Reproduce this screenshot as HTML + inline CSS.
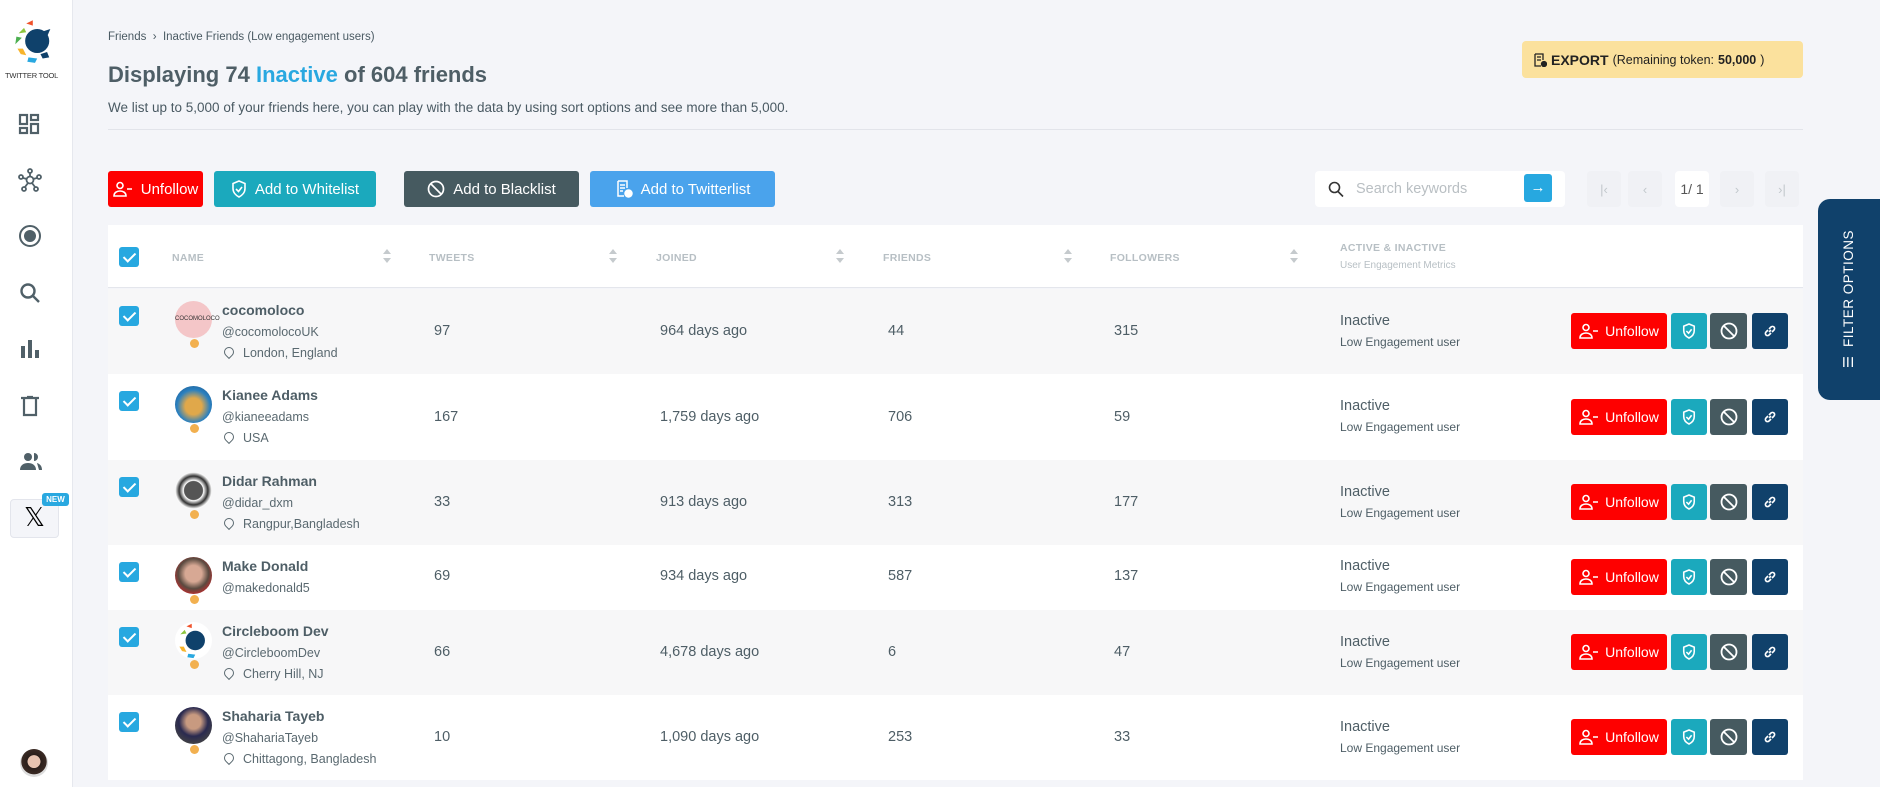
<!DOCTYPE html>
<html><head><meta charset="utf-8">
<style>
*{box-sizing:border-box;margin:0;padding:0}
body{width:1880px;height:787px;overflow:hidden;background:#f4f5f9;font-family:"Liberation Sans",sans-serif;color:#4a5a63;position:relative}
.a{position:absolute}
.side{left:0;top:0;width:73px;height:787px;background:#fff;border-right:1px solid #e6e8ee}
.btn{position:absolute;height:36px;border-radius:3px;color:#fff;font-size:15px;display:flex;align-items:center;justify-content:center;gap:8px}
.row{position:absolute;left:108px;width:1695px}
.row.g{background:#f7f7f8}.row.w{background:#fff}
.cb{position:absolute;left:11px;width:20px;height:20px;background:#27a8e0;border-radius:3px}
.cb:after{content:"";position:absolute;left:7px;top:3px;width:5px;height:10px;border:solid #fff;border-width:0 2px 2px 0;transform:rotate(45deg)}
.av{position:absolute;left:67px;width:37px;height:37px;border-radius:50%}
.dot{position:absolute;left:82px;width:9px;height:9px;border-radius:50%;background:#f2b04f}
.nm{position:absolute;left:114px;font-weight:bold;font-size:14px;color:#4e5e66}
.hd{position:absolute;left:114px;font-size:12.5px;color:#5a6970}
.lc{position:absolute;left:114px;font-size:12.5px;color:#5a6970}
.lc:before{content:"";display:inline-block;width:8px;height:8px;border:1.5px solid #5a6970;border-radius:50% 50% 50% 0;transform:rotate(-45deg);margin:0 9px 0 2px;vertical-align:0}
.n{position:absolute;font-size:14.5px;color:#4e5e66}
.st{position:absolute;left:1232px;font-size:14.5px;color:#4e5e66}
.st2{position:absolute;left:1232px;font-size:12px;color:#4e5e66}
.ab{position:absolute;height:36px;border-radius:3px;display:flex;align-items:center;justify-content:center;color:#fff;font-size:14px;gap:6px}
.th{position:absolute;top:27px;font-size:10.5px;color:#b7bfc4;font-weight:bold;letter-spacing:.3px}
.sort{position:absolute;top:22px;width:10px;height:18px}
.pg{position:absolute;top:171px;width:34px;height:36px;background:#f0f1f5;border-radius:4px;color:#c2c8cc;font-size:13px;display:flex;align-items:center;justify-content:center}
.si{position:absolute;left:18px}
</style></head><body>
<div class="a side">
 <svg class="a" style="left:12px;top:18px" width="46" height="46" viewBox="0 0 40 42">
  <path d="M12 5 L18 2 L18 7 Z" fill="#f0522b"/><path d="M5 14 L10 9 L12 13 Z" fill="#8dc63f"/><path d="M2 24 L3 17 L8 18 Z" fill="#4caf50"/><path d="M4 28 L9 28 L12 34 L7 33Z" fill="#f7b42c"/><path d="M14 36 L22 37 L20 41 L13 40Z" fill="#29a8e0"/>
  <circle cx="22" cy="21" r="11" fill="#0f416b"/><path d="M28 12 L34 10 L31 17Z" fill="#0f416b"/><path d="M25 33 L31 31 L33 36 L27 37Z" fill="#0f416b"/>
 </svg>
 <div class="a" style="left:5px;top:71px;font-size:7.5px;color:#333;letter-spacing:-.2px">TWITTER TOOL</div>
 <svg class="a si" style="top:113px" width="22" height="22" viewBox="0 0 22 22" fill="none" stroke="#506068" stroke-width="2.2"><rect x="2" y="2" width="7" height="9"/><rect x="13" y="2" width="7" height="5"/><rect x="2" y="15" width="7" height="5"/><rect x="13" y="11" width="7" height="9"/></svg>
 <svg class="a si" style="top:168px" width="24" height="24" viewBox="0 0 24 24" fill="none" stroke="#506068" stroke-width="1.8"><circle cx="12" cy="12" r="3.5"/><circle cx="12" cy="3" r="2"/><circle cx="3" cy="9" r="2"/><circle cx="21" cy="9" r="2"/><circle cx="6" cy="21" r="2"/><circle cx="18" cy="21" r="2"/><path d="M12 5v3.5M5 10l4 1M19 10l-4 1M7 19l3-4M17 19l-3-4"/></svg>
 <svg class="a si" style="top:224px" width="24" height="24" viewBox="0 0 24 24"><circle cx="12" cy="12" r="10" fill="none" stroke="#506068" stroke-width="2"/><circle cx="12" cy="12" r="6" fill="#506068"/></svg>
 <svg class="a si" style="top:281px" width="24" height="24" viewBox="0 0 24 24" fill="none" stroke="#506068" stroke-width="2.4"><circle cx="10" cy="10" r="6.5"/><path d="M15 15l6 6"/></svg>
 <svg class="a si" style="top:337px" width="24" height="24" viewBox="0 0 24 24" fill="#506068"><rect x="3" y="9" width="4" height="12"/><rect x="10" y="3" width="4" height="18"/><rect x="17" y="13" width="4" height="8"/></svg>
 <svg class="a si" style="top:394px" width="24" height="24" viewBox="0 0 24 24" fill="none" stroke="#506068" stroke-width="2.2"><path d="M3 4h18M9 3h6M6 5v16h12V5"/></svg>
 <svg class="a si" style="top:449px" width="26" height="24" viewBox="0 0 26 24" fill="#506068"><circle cx="10" cy="8" r="4"/><path d="M2 21c0-5 4-7 8-7s8 2 8 7z"/><path d="M16 4a4 4 0 010 8zM19 14c3 1 5 3 5 7h-3z"/></svg>
 <div class="a" style="left:10px;top:499px;width:49px;height:39px;background:#f4f5f9;border:1px solid #e3e5ec;border-radius:4px;font-size:26px;color:#000;text-align:center;line-height:37px;font-family:'DejaVu Sans',sans-serif">𝕏</div>
 <div class="a" style="left:42px;top:493px;width:27px;height:13px;background:#29a8e0;border-radius:3px;color:#fff;font-size:8px;font-weight:bold;text-align:center;line-height:13px">NEW</div>
 <div class="a" style="left:20px;top:749px;width:28px;height:28px;border-radius:50%;background:radial-gradient(circle at 50% 45%,#e8c3b0 30%,#2a1e1a 32%,#3a2a24 60%,#ddd 62%)"></div>
</div>

<div class="a" style="left:108px;top:31px;font-size:11.5px;color:#4a5a63">Friends &nbsp;›&nbsp; Inactive Friends (Low engagement users)</div>
<div class="a" style="left:108px;top:62px;font-size:22px;font-weight:bold;color:#4e5e66">Displaying 74 <span style="color:#29a8e0">Inactive</span> of 604 friends</div>
<div class="a" style="left:108px;top:100px;font-size:13.5px;color:#4a5a63">We list up to 5,000 of your friends here, you can play with the data by using sort options and see more than 5,000.</div>
<div class="a" style="left:108px;top:129px;width:1695px;height:1px;background:#e2e4ea"></div>
<div class="a" style="left:1522px;top:41px;width:281px;height:37px;background:#fbe19d;border-radius:4px;font-size:12.5px;color:#222;display:flex;align-items:center;padding-left:11px;gap:4px">
 <svg width="14" height="14" viewBox="0 0 14 14" fill="none" stroke="#222" stroke-width="1.3"><path d="M2 1h8v6M2 1v12h6M4 4h4M4 7h4"/><circle cx="11" cy="11" r="2.5" fill="#222"/></svg>
 <b style="font-size:14px">EXPORT</b> (Remaining token: <b>50,000</b>)</div>

<div class="btn" style="left:108px;top:171px;width:95px;background:#fe0000"><svg width="20" height="16" viewBox="0 0 20 16" fill="none" stroke="#fff" stroke-width="1.6"><circle cx="7" cy="4.5" r="3"/><path d="M1 15c0-3.5 3-5 6-5s6 1.5 6 5zM14 8h5"/></svg>Unfollow</div>
<div class="btn" style="left:214px;top:171px;width:162px;background:#1ba9bd"><svg width="16" height="18" viewBox="0 0 16 18" fill="none" stroke="#fff" stroke-width="1.6"><path d="M8 1l6 2.5v5c0 4-3 7-6 8.5-3-1.5-6-4.5-6-8.5v-5z"/><path d="M5 9l2.5 2.5L11 7"/></svg>Add to Whitelist</div>
<div class="btn" style="left:404px;top:171px;width:175px;background:#465a60"><svg width="18" height="18" viewBox="0 0 18 18" fill="none" stroke="#fff" stroke-width="1.7"><circle cx="9" cy="9" r="7.5"/><path d="M4 4l10 10"/></svg>Add to Blacklist</div>
<div class="btn" style="left:590px;top:171px;width:185px;background:#4aa3ec"><svg width="18" height="18" viewBox="0 0 18 18" fill="none" stroke="#fff" stroke-width="1.5"><path d="M3 1h9v7M3 1v15h6M5 5h5M5 8h5M5 11h3"/><circle cx="13.5" cy="13.5" r="3.5" fill="#fff"/></svg>Add to Twitterlist</div>

<div class="a" style="left:1315px;top:171px;width:250px;height:36px;background:#fff;border-radius:4px">
 <svg class="a" style="left:13px;top:10px" width="16" height="17" viewBox="0 0 16 17" fill="none" stroke="#333" stroke-width="1.6"><circle cx="6.5" cy="6.5" r="5"/><path d="M10 10.5l5 5"/></svg>
 <div class="a" style="left:41px;top:10px;font-size:14.5px;color:#b9bfc3">Search keywords</div>
 <div class="a" style="left:209px;top:3px;width:28px;height:28px;background:#27a8e0;border-radius:3px;color:#fff;font-size:15px;text-align:center;line-height:27px;font-weight:bold">→</div>
</div>
<div class="pg" style="left:1587px">|‹</div><div class="pg" style="left:1628px">‹</div>
<div class="pg" style="left:1675px;background:#fff;color:#555;font-size:14px">1/ 1</div>
<div class="pg" style="left:1720px">›</div><div class="pg" style="left:1765px">›|</div>

<div class="a" style="left:1818px;top:199px;width:62px;height:201px;background:#10416b;border-radius:12px 0 0 12px">
 <div class="a" style="left:31px;top:100px;transform:translate(-50%,-50%) rotate(-90deg);white-space:nowrap;color:#fff;font-size:13.5px;letter-spacing:.5px">☰&nbsp; FILTER OPTIONS</div>
</div>

<div class="a" style="left:108px;top:225px;width:1695px;height:63px;background:#fff;border-bottom:1px solid #e4e6ec">
 <div class="cb" style="top:22px"></div>
 <div class="th" style="left:64px">NAME</div><div class="th" style="left:321px">TWEETS</div><div class="th" style="left:548px">JOINED</div><div class="th" style="left:775px">FRIENDS</div><div class="th" style="left:1002px">FOLLOWERS</div>
 <div class="th" style="left:1232px;top:17px">ACTIVE &amp; INACTIVE</div>
 <div class="a" style="left:1232px;top:35px;font-size:10px;color:#b7bfc4">User Engagement Metrics</div>
 <svg class="sort" style="left:274px" viewBox="0 0 10 18" fill="#c5cacd"><path d="M1 7l4-5 4 5zM1 11l4 5 4-5z"/></svg>
 <svg class="sort" style="left:500px" viewBox="0 0 10 18" fill="#c5cacd"><path d="M1 7l4-5 4 5zM1 11l4 5 4-5z"/></svg>
 <svg class="sort" style="left:727px" viewBox="0 0 10 18" fill="#c5cacd"><path d="M1 7l4-5 4 5zM1 11l4 5 4-5z"/></svg>
 <svg class="sort" style="left:955px" viewBox="0 0 10 18" fill="#c5cacd"><path d="M1 7l4-5 4 5zM1 11l4 5 4-5z"/></svg>
 <svg class="sort" style="left:1181px" viewBox="0 0 10 18" fill="#c5cacd"><path d="M1 7l4-5 4 5zM1 11l4 5 4-5z"/></svg>
</div>

<div class="row g" style="top:289px;height:85px">
 <div class="cb" style="top:17px"></div>
 <div class="av" style="top:12px;background:#f4c6c8;font-size:6px;color:#333;text-align:center;line-height:37px">COCOMOLOCO</div><div class="dot" style="top:50px"></div>
 <div class="nm" style="top:13px">cocomoloco</div><div class="hd" style="top:36px">@cocomolocoUK</div><div class="lc" style="top:57px">London, England</div>
 <div class="n" style="left:326px;top:34px">97</div><div class="n" style="left:552px;top:34px">964 days ago</div><div class="n" style="left:780px;top:34px">44</div><div class="n" style="left:1006px;top:34px">315</div>
 <div class="st" style="top:24px">Inactive</div><div class="st2" style="top:46px">Low Engagement user</div>
 <div class="ab" style="left:1463px;top:24px;width:96px;background:#fe0000"><svg width="20" height="16" viewBox="0 0 20 16" fill="none" stroke="#fff" stroke-width="1.6"><circle cx="7" cy="4.5" r="3"/><path d="M1 15c0-3.5 3-5 6-5s6 1.5 6 5zM14 8h5"/></svg>Unfollow</div>
 <div class="ab" style="left:1563px;top:24px;width:36px;background:#1ba9bd"><svg width="14" height="16" viewBox="0 0 16 18" fill="none" stroke="#fff" stroke-width="1.8"><path d="M8 1l6 2.5v5c0 4-3 7-6 8.5-3-1.5-6-4.5-6-8.5v-5z"/><path d="M5 9l2.5 2.5L11 7"/></svg></div>
 <div class="ab" style="left:1602px;top:24px;width:37px;background:#465a60"><svg width="18" height="18" viewBox="0 0 18 18" fill="none" stroke="#fff" stroke-width="1.8"><circle cx="9" cy="9" r="7.5"/><path d="M4 4l10 10"/></svg></div>
 <div class="ab" style="left:1644px;top:24px;width:36px;background:#10416b"><svg width="14" height="14" viewBox="0 0 14 14" fill="none" stroke="#fff" stroke-width="1.6"><path d="M6 8l2-2M5 6L3 8a2 2 0 003 3l2-2M9 8l2-2a2 2 0 00-3-3L6 5"/></svg></div>
</div>
<div class="row w" style="top:374px;height:86px">
 <div class="cb" style="top:17px"></div>
 <div class="av" style="top:12px;background:radial-gradient(circle at 50% 55%,#e0a84a 30%,#2a80c0 60%,#1b4f80)"></div><div class="dot" style="top:50px"></div>
 <div class="nm" style="top:13px">Kianee Adams</div><div class="hd" style="top:36px">@kianeeadams</div><div class="lc" style="top:57px">USA</div>
 <div class="n" style="left:326px;top:35px">167</div><div class="n" style="left:552px;top:35px">1,759 days ago</div><div class="n" style="left:780px;top:35px">706</div><div class="n" style="left:1006px;top:35px">59</div>
 <div class="st" style="top:24px">Inactive</div><div class="st2" style="top:46px">Low Engagement user</div>
 <div class="ab" style="left:1463px;top:25px;width:96px;background:#fe0000"><svg width="20" height="16" viewBox="0 0 20 16" fill="none" stroke="#fff" stroke-width="1.6"><circle cx="7" cy="4.5" r="3"/><path d="M1 15c0-3.5 3-5 6-5s6 1.5 6 5zM14 8h5"/></svg>Unfollow</div>
 <div class="ab" style="left:1563px;top:25px;width:36px;background:#1ba9bd"><svg width="14" height="16" viewBox="0 0 16 18" fill="none" stroke="#fff" stroke-width="1.8"><path d="M8 1l6 2.5v5c0 4-3 7-6 8.5-3-1.5-6-4.5-6-8.5v-5z"/><path d="M5 9l2.5 2.5L11 7"/></svg></div>
 <div class="ab" style="left:1602px;top:25px;width:37px;background:#465a60"><svg width="18" height="18" viewBox="0 0 18 18" fill="none" stroke="#fff" stroke-width="1.8"><circle cx="9" cy="9" r="7.5"/><path d="M4 4l10 10"/></svg></div>
 <div class="ab" style="left:1644px;top:25px;width:36px;background:#10416b"><svg width="14" height="14" viewBox="0 0 14 14" fill="none" stroke="#fff" stroke-width="1.6"><path d="M6 8l2-2M5 6L3 8a2 2 0 003 3l2-2M9 8l2-2a2 2 0 00-3-3L6 5"/></svg></div>
</div>
<div class="row g" style="top:460px;height:85px">
 <div class="cb" style="top:17px"></div>
 <div class="av" style="top:12px;background:radial-gradient(circle at 50% 50%,#555 35%,#fff 38%,#333 55%,#fff 70%)"></div><div class="dot" style="top:50px"></div>
 <div class="nm" style="top:13px">Didar Rahman</div><div class="hd" style="top:36px">@didar_dxm</div><div class="lc" style="top:57px">Rangpur,Bangladesh</div>
 <div class="n" style="left:326px;top:34px">33</div><div class="n" style="left:552px;top:34px">913 days ago</div><div class="n" style="left:780px;top:34px">313</div><div class="n" style="left:1006px;top:34px">177</div>
 <div class="st" style="top:24px">Inactive</div><div class="st2" style="top:46px">Low Engagement user</div>
 <div class="ab" style="left:1463px;top:24px;width:96px;background:#fe0000"><svg width="20" height="16" viewBox="0 0 20 16" fill="none" stroke="#fff" stroke-width="1.6"><circle cx="7" cy="4.5" r="3"/><path d="M1 15c0-3.5 3-5 6-5s6 1.5 6 5zM14 8h5"/></svg>Unfollow</div>
 <div class="ab" style="left:1563px;top:24px;width:36px;background:#1ba9bd"><svg width="14" height="16" viewBox="0 0 16 18" fill="none" stroke="#fff" stroke-width="1.8"><path d="M8 1l6 2.5v5c0 4-3 7-6 8.5-3-1.5-6-4.5-6-8.5v-5z"/><path d="M5 9l2.5 2.5L11 7"/></svg></div>
 <div class="ab" style="left:1602px;top:24px;width:37px;background:#465a60"><svg width="18" height="18" viewBox="0 0 18 18" fill="none" stroke="#fff" stroke-width="1.8"><circle cx="9" cy="9" r="7.5"/><path d="M4 4l10 10"/></svg></div>
 <div class="ab" style="left:1644px;top:24px;width:36px;background:#10416b"><svg width="14" height="14" viewBox="0 0 14 14" fill="none" stroke="#fff" stroke-width="1.6"><path d="M6 8l2-2M5 6L3 8a2 2 0 003 3l2-2M9 8l2-2a2 2 0 00-3-3L6 5"/></svg></div>
</div>
<div class="row w" style="top:545px;height:65px">
 <div class="cb" style="top:17px"></div>
 <div class="av" style="top:12px;background:radial-gradient(circle at 50% 45%,#d7a894 30%,#5a4a40 55%,#b03030 75%)"></div><div class="dot" style="top:50px"></div>
 <div class="nm" style="top:13px">Make Donald</div><div class="hd" style="top:36px">@makedonald5</div>
 <div class="n" style="left:326px;top:23px">69</div><div class="n" style="left:552px;top:23px">934 days ago</div><div class="n" style="left:780px;top:23px">587</div><div class="n" style="left:1006px;top:23px">137</div>
 <div class="st" style="top:13px">Inactive</div><div class="st2" style="top:35px">Low Engagement user</div>
 <div class="ab" style="left:1463px;top:14px;width:96px;background:#fe0000"><svg width="20" height="16" viewBox="0 0 20 16" fill="none" stroke="#fff" stroke-width="1.6"><circle cx="7" cy="4.5" r="3"/><path d="M1 15c0-3.5 3-5 6-5s6 1.5 6 5zM14 8h5"/></svg>Unfollow</div>
 <div class="ab" style="left:1563px;top:14px;width:36px;background:#1ba9bd"><svg width="14" height="16" viewBox="0 0 16 18" fill="none" stroke="#fff" stroke-width="1.8"><path d="M8 1l6 2.5v5c0 4-3 7-6 8.5-3-1.5-6-4.5-6-8.5v-5z"/><path d="M5 9l2.5 2.5L11 7"/></svg></div>
 <div class="ab" style="left:1602px;top:14px;width:37px;background:#465a60"><svg width="18" height="18" viewBox="0 0 18 18" fill="none" stroke="#fff" stroke-width="1.8"><circle cx="9" cy="9" r="7.5"/><path d="M4 4l10 10"/></svg></div>
 <div class="ab" style="left:1644px;top:14px;width:36px;background:#10416b"><svg width="14" height="14" viewBox="0 0 14 14" fill="none" stroke="#fff" stroke-width="1.6"><path d="M6 8l2-2M5 6L3 8a2 2 0 003 3l2-2M9 8l2-2a2 2 0 00-3-3L6 5"/></svg></div>
</div>
<div class="row g" style="top:610px;height:85px">
 <div class="cb" style="top:17px"></div>
 <div class="av" style="top:12px;background:#fff"><svg width="37" height="37" viewBox="0 0 40 42"><path d="M12 5 L18 2 L18 7 Z" fill="#f0522b"/><path d="M5 14 L10 9 L12 13 Z" fill="#8dc63f"/><path d="M4 28 L9 28 L12 34 L7 33Z" fill="#f7b42c"/><path d="M14 36 L22 37 L20 41 L13 40Z" fill="#29a8e0"/><circle cx="22" cy="21" r="11" fill="#0f416b"/></svg></div><div class="dot" style="top:50px"></div>
 <div class="nm" style="top:13px">Circleboom Dev</div><div class="hd" style="top:36px">@CircleboomDev</div><div class="lc" style="top:57px">Cherry Hill, NJ</div>
 <div class="n" style="left:326px;top:34px">66</div><div class="n" style="left:552px;top:34px">4,678 days ago</div><div class="n" style="left:780px;top:34px">6</div><div class="n" style="left:1006px;top:34px">47</div>
 <div class="st" style="top:24px">Inactive</div><div class="st2" style="top:46px">Low Engagement user</div>
 <div class="ab" style="left:1463px;top:24px;width:96px;background:#fe0000"><svg width="20" height="16" viewBox="0 0 20 16" fill="none" stroke="#fff" stroke-width="1.6"><circle cx="7" cy="4.5" r="3"/><path d="M1 15c0-3.5 3-5 6-5s6 1.5 6 5zM14 8h5"/></svg>Unfollow</div>
 <div class="ab" style="left:1563px;top:24px;width:36px;background:#1ba9bd"><svg width="14" height="16" viewBox="0 0 16 18" fill="none" stroke="#fff" stroke-width="1.8"><path d="M8 1l6 2.5v5c0 4-3 7-6 8.5-3-1.5-6-4.5-6-8.5v-5z"/><path d="M5 9l2.5 2.5L11 7"/></svg></div>
 <div class="ab" style="left:1602px;top:24px;width:37px;background:#465a60"><svg width="18" height="18" viewBox="0 0 18 18" fill="none" stroke="#fff" stroke-width="1.8"><circle cx="9" cy="9" r="7.5"/><path d="M4 4l10 10"/></svg></div>
 <div class="ab" style="left:1644px;top:24px;width:36px;background:#10416b"><svg width="14" height="14" viewBox="0 0 14 14" fill="none" stroke="#fff" stroke-width="1.6"><path d="M6 8l2-2M5 6L3 8a2 2 0 003 3l2-2M9 8l2-2a2 2 0 00-3-3L6 5"/></svg></div>
</div>
<div class="row w" style="top:695px;height:85px">
 <div class="cb" style="top:17px"></div>
 <div class="av" style="top:12px;background:radial-gradient(circle at 50% 40%,#c89a80 25%,#2a2a50 50%,#444 80%)"></div><div class="dot" style="top:50px"></div>
 <div class="nm" style="top:13px">Shaharia Tayeb</div><div class="hd" style="top:36px">@ShahariaTayeb</div><div class="lc" style="top:57px">Chittagong, Bangladesh</div>
 <div class="n" style="left:326px;top:34px">10</div><div class="n" style="left:552px;top:34px">1,090 days ago</div><div class="n" style="left:780px;top:34px">253</div><div class="n" style="left:1006px;top:34px">33</div>
 <div class="st" style="top:24px">Inactive</div><div class="st2" style="top:46px">Low Engagement user</div>
 <div class="ab" style="left:1463px;top:24px;width:96px;background:#fe0000"><svg width="20" height="16" viewBox="0 0 20 16" fill="none" stroke="#fff" stroke-width="1.6"><circle cx="7" cy="4.5" r="3"/><path d="M1 15c0-3.5 3-5 6-5s6 1.5 6 5zM14 8h5"/></svg>Unfollow</div>
 <div class="ab" style="left:1563px;top:24px;width:36px;background:#1ba9bd"><svg width="14" height="16" viewBox="0 0 16 18" fill="none" stroke="#fff" stroke-width="1.8"><path d="M8 1l6 2.5v5c0 4-3 7-6 8.5-3-1.5-6-4.5-6-8.5v-5z"/><path d="M5 9l2.5 2.5L11 7"/></svg></div>
 <div class="ab" style="left:1602px;top:24px;width:37px;background:#465a60"><svg width="18" height="18" viewBox="0 0 18 18" fill="none" stroke="#fff" stroke-width="1.8"><circle cx="9" cy="9" r="7.5"/><path d="M4 4l10 10"/></svg></div>
 <div class="ab" style="left:1644px;top:24px;width:36px;background:#10416b"><svg width="14" height="14" viewBox="0 0 14 14" fill="none" stroke="#fff" stroke-width="1.6"><path d="M6 8l2-2M5 6L3 8a2 2 0 003 3l2-2M9 8l2-2a2 2 0 00-3-3L6 5"/></svg></div>
</div>
</body></html>
